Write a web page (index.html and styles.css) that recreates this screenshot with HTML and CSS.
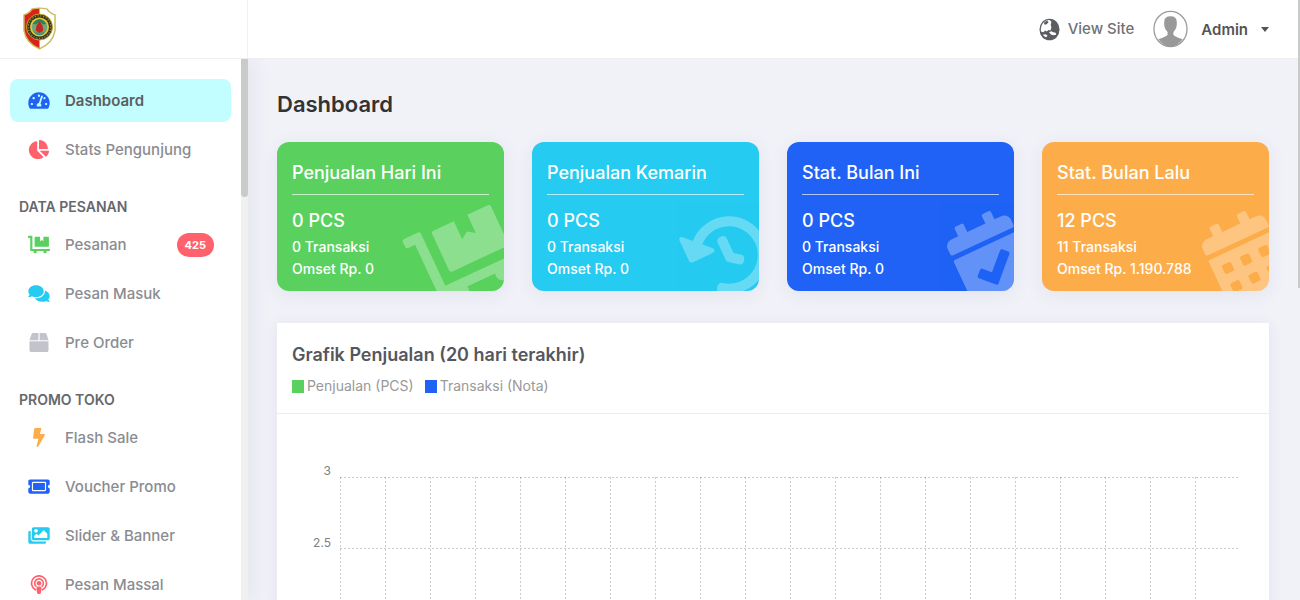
FILE: index.html
```html
<!DOCTYPE html>
<html lang="id">
<head>
<meta charset="utf-8">
<meta name="viewport" content="width=device-width, initial-scale=1">
<title>Dashboard</title>
<link rel="stylesheet" href="styles.css">
</head>
<body>
<div class="app">
  <header class="topbar">
    <a class="brand" href="#" aria-label="Beranda">
      <svg class="logo" viewBox="0 0 34 44">
        <path d="M9 2Q17 0 25 2Q27 6 33 8V24Q31 37 17 43Q3 37 1 24V8Q7 6 9 2Z" fill="#fff"/>
        <path d="M17 1Q12 1 9 2Q7 6 1 8V24Q3 37 17 43Z" fill="#dc211c"/>
        <path d="M9 2Q17 0 25 2Q27 6 33 8V24Q31 37 17 43Q3 37 1 24V8Q7 6 9 2Z" fill="none" stroke="#c9bd5c" stroke-width="1.5"/>
        <circle cx="17" cy="20.5" r="13.4" fill="#39351d" stroke="#c9a925" stroke-width="1"/>
        <circle cx="17" cy="20.5" r="11.6" fill="none" stroke="#9a9155" stroke-width="1.2" stroke-dasharray="1.3 1.6"/>
        <circle cx="17" cy="20.5" r="9.8" fill="#e6c72b"/>
        <circle cx="17" cy="20.5" r="8" fill="#6ea67f"/>
        <path d="M10 17Q17 8 24 17L21 18L17 15L13 18Z" fill="#2f7f5c"/>
        <path d="M17 14L20 19L21 24L17 27L13 24L14 19Z" fill="#c3271f"/>
        <path d="M10 24Q17 29 24 24L21 28Q17 30 13 28Z" fill="#4f9170"/>
      </svg>
    </a>
    <div class="tools">
      <a class="site-link" href="#">
        <svg class="globe" viewBox="0 0 22 24"><ellipse cx="11" cy="12" rx="10.500" ry="11.300" fill="#5b5d60"/><path d="M2 14Q1.500 8 5 4.500Q8 1.800 11.500 2.200L13 4L12.300 7L13 10L12 13L10 12.500L8 14L6.500 13L4.500 15Z" fill="#fff"/><path d="M8.500 2.500L10 4.500L8 6.500L6 7L5 5Z" fill="#5b5d60"/><path d="M10.500 15L13 13.800L15 15L17.500 15.500L18 17.500L15 18L12.500 17.300Z" fill="#fff"/><path d="M4 17.500L7 17L9 18.500L7.500 20Q5 19.500 4 17.500Z" fill="#fff"/></svg>
        <span>View Site</span>
      </a>
      <button class="account" type="button">
        <svg class="avatar" viewBox="0 0 36 38"><ellipse cx="18" cy="19" rx="17" ry="18.200" fill="#fff"/><path d="M11.500 12Q11.500 6 18 6T24.500 12Q25 18 21 22V25Q22 27 30.500 29.500Q25 37 18 37T5.500 29.500Q14 27 15 25V22Q11 18 11.500 12Z" fill="#999"/><ellipse cx="18" cy="19" rx="17" ry="18.200" fill="none" stroke="#999" stroke-width="1.300"/></svg>
        <span>Admin</span>
        <span class="caret"></span>
      </button>
    </div>
  </header>
  <div class="body">
    <aside class="sidebar">
      <nav class="menu">
        <a class="item active" href="#"><svg class="icon blue" viewBox="0 0 576 512"><path d="M288 32C128.940 32 0 160.940 0 320c0 52.800 14.250 102.260 39.060 144.800 5.610 9.620 16.300 15.200 27.440 15.200h443c11.140 0 21.830-5.580 27.440-15.200C561.750 422.260 576 372.800 576 320c0-159.060-128.940-288-288-288zm0 64c14.710 0 26.580 10.130 30.320 23.650-1.110 2.260-2.640 4.230-3.450 6.670l-9.220 27.670c-5.130 3.490-10.970 6.010-17.640 6.010-17.670 0-32-14.330-32-32S270.330 96 288 96zM96 384c-17.670 0-32-14.330-32-32s14.330-32 32-32 32 14.330 32 32-14.330 32-32 32zm48-160c-17.670 0-32-14.330-32-32s14.330-32 32-32 32 14.330 32 32-14.330 32-32 32zm246.770-72.410l-61.330 184C343.130 347.330 352 364.540 352 384c0 11.720-3.380 22.550-8.880 32H232.880c-5.500-9.450-8.880-20.280-8.880-32 0-33.940 26.500-61.430 59.900-63.590l61.340-184.010c4.170-12.560 17.730-19.450 30.360-15.170 12.570 4.190 19.350 17.790 15.170 30.360zm14.660 57.200l15.520-46.550c3.470-1.290 7.130-2.230 11.050-2.230 17.670 0 32 14.330 32 32s-14.330 32-32 32c-11.380-.01-20.890-6.280-26.570-15.220zM480 384c-17.670 0-32-14.330-32-32s14.330-32 32-32 32 14.330 32 32-14.330 32-32 32z"/></svg><span>Dashboard</span></a>
        <a class="item" href="#"><svg class="icon red" viewBox="0 0 544 512"><path d="M527.790 288H290.500l158.030 158.030c6.040 6.040 15.980 6.530 22.190.68 38.700-36.460 65.320-85.610 73.130-140.860 1.340-9.460-6.510-17.850-16.060-17.850zm-15.830-64.800C503.720 103.740 408.260 8.280 288.800.04 279.680-.59 272 7.100 272 16.240V240h223.770c9.140 0 16.820-7.680 16.190-16.800zM224 288V50.710c0-9.550-8.390-17.400-17.840-16.060C86.990 51.490-4.100 155.600.14 280.370 4.500 408.510 114.830 512 243.040 511.980c50.410-.07 96.980-16.250 135.280-43.380 7.900-5.610 8.420-17.140 1.570-24L224 288z"/></svg><span>Stats Pengunjung</span></a>
        <h2 class="group">DATA PESANAN</h2>
        <a class="item" href="#"><svg class="icon green" viewBox="0 0 640 512"><path d="M208 320h384c8.800 0 16-7.200 16-16V48c0-8.800-7.200-16-16-16H448v128l-48-32-48 32V32H208c-8.800 0-16 7.200-16 16v256c0 8.800 7.200 16 16 16zm416 64H128V16c0-8.800-7.200-16-16-16H16C7.200 0 0 7.200 0 16v32c0 8.800 7.200 16 16 16h48v368c0 8.800 7.200 16 16 16h82.900c-1.800 5-2.900 10.400-2.900 16 0 26.500 21.500 48 48 48s48-21.500 48-48c0-5.600-1.200-11-2.900-16H451c-1.800 5-2.900 10.400-2.900 16 0 26.500 21.500 48 48 48s48-21.500 48-48c0-5.600-1.200-11-2.900-16H624c8.800 0 16-7.200 16-16v-32c0-8.800-7.200-16-16-16z"/></svg><span>Pesanan</span><span class="badge">425</span></a>
        <a class="item" href="#"><svg class="icon cyan" viewBox="0 0 576 512"><path d="M416 192c0-88.400-93.100-160-208-160S0 103.600 0 192c0 34.300 14.100 65.900 38 92-13.400 30.200-35.500 54.200-35.800 54.500-2.200 2.300-2.800 5.700-1.500 8.700S4.800 352 8 352c36.600 0 66.900-12.300 88.700-25 32.200 15.700 70.300 25 111.300 25 114.900 0 208-71.600 208-160zm122 220c23.900-26 38-57.700 38-92 0-66.900-53.500-124.200-129.300-148.100.9 6.600 1.300 13.300 1.300 20.100 0 105.900-107.700 192-240 192-10.800 0-21.300-.8-31.700-1.900C207.800 439.600 281.800 480 368 480c41 0 79.100-9.200 111.300-25 21.800 12.700 52.100 25 88.700 25 3.200 0 6.100-1.900 7.300-4.800 1.300-2.900.7-6.300-1.500-8.700-.3-.3-22.400-24.200-35.800-54.500z"/></svg><span>Pesan Masuk</span></a>
        <a class="item" href="#"><svg class="icon gray" viewBox="0 0 512 512"><path d="M509.500 184.600L458.900 32.800C452.400 13.200 434.100 0 413.400 0H272v192h238.700c-.4-2.500-.4-5-1.200-7.400zM240 0H98.600c-20.700 0-39 13.200-45.500 32.800L2.500 184.600c-.8 2.400-.8 4.900-1.200 7.400H240V0zM0 224v240c0 26.500 21.500 48 48 48h416c26.500 0 48-21.500 48-48V224H0z"/></svg><span>Pre Order</span></a>
        <h2 class="group">PROMO TOKO</h2>
        <a class="item" href="#"><svg class="icon orange" viewBox="0 0 320 512"><path d="M296 160H180.600l42.600-129.800C227.200 15 215.700 0 200 0H56C44 0 33.800 8.900 32.200 20.800l-32 240C-1.700 275.200 9.500 288 24 288h118.700L96.600 482.500c-3.600 15.200 8 29.500 23.300 29.500 8.400 0 16.400-4.400 20.800-12l176-304c9.300-15.900-2.200-36-20.700-36z"/></svg><span>Flash Sale</span></a>
        <a class="item" href="#"><svg class="icon blue" viewBox="0 0 576 512"><path d="M128 160h320v192H128V160zm400 96c0 26.510 21.490 48 48 48v96c0 26.510-21.490 48-48 48H48c-26.510 0-48-21.490-48-48v-96c26.510 0 48-21.490 48-48s-21.490-48-48-48v-96c0-26.510 21.490-48 48-48h480c26.510 0 48 21.490 48 48v96c-26.510 0-48 21.490-48 48zm-48-104c0-13.255-10.745-24-24-24H120c-13.255 0-24 10.745-24 24v208c0 13.255 10.745 24 24 24h336c13.255 0 24-10.745 24-24V152z"/></svg><span>Voucher Promo</span></a>
        <a class="item" href="#"><svg class="icon cyan" viewBox="0 0 576 512"><path d="M480 416v16c0 26.510-21.490 48-48 48H48c-26.510 0-48-21.490-48-48V176c0-26.510 21.490-48 48-48h16v208c0 44.112 35.888 80 80 80h336zm96-80V80c0-26.510-21.490-48-48-48H144c-26.510 0-48 21.490-48 48v256c0 26.510 21.490 48 48 48h384c26.510 0 48-21.490 48-48zM256 128c0 26.510-21.490 48-48 48s-48-21.490-48-48 21.490-48 48-48 48 21.490 48 48zm-96 144l55.515-55.515c4.686-4.686 12.284-4.686 16.971 0L272 256l135.515-135.515c4.686-4.686 12.284-4.686 16.971 0L512 208v112H160v-48z"/></svg><span>Slider &amp; Banner</span></a>
        <a class="item" href="#"><svg class="icon red" viewBox="0 0 448 512"><g fill="none" stroke="#ff626d" stroke-width="46" stroke-linecap="round"><path d="M125 398A201 201 0 1 1 323 398"/><path d="M142 303A116 116 0 1 1 306 303"/></g><circle cx="224" cy="222" r="62"/><path d="M224 312c34 0 70 10 70 48 0 30-12 90-20 122-5 22-26 30-50 30s-45-8-50-30c-8-32-20-92-20-122 0-38 36-48 70-48z"/></svg><span>Pesan Massal</span></a>
      </nav>
      <div class="track"><div class="thumb"></div></div>
    </aside>
    <main class="content">
      <h1 class="title">Dashboard</h1>
      <section class="cards">
        <article class="card bg-green">
          <h3 class="card-title">Penjualan Hari Ini</h3>
          <p class="count">0 PCS</p><p class="line">0 Transaksi</p><p class="line">Omset Rp. 0</p>
          <svg class="mark" viewBox="0 0 640 512"><path d="M208 320h384c8.800 0 16-7.200 16-16V48c0-8.800-7.200-16-16-16H448v128l-48-32-48 32V32H208c-8.800 0-16 7.200-16 16v256c0 8.800 7.200 16 16 16zm416 64H128V16c0-8.800-7.200-16-16-16H16C7.200 0 0 7.200 0 16v32c0 8.800 7.200 16 16 16h48v368c0 8.800 7.200 16 16 16h82.900c-1.800 5-2.900 10.400-2.900 16 0 26.500 21.500 48 48 48s48-21.500 48-48c0-5.600-1.200-11-2.900-16H451c-1.800 5-2.900 10.400-2.900 16 0 26.500 21.500 48 48 48s48-21.500 48-48c0-5.600-1.200-11-2.900-16H624c8.800 0 16-7.200 16-16v-32c0-8.800-7.200-16-16-16z"/></svg>
        </article>
        <article class="card bg-cyan">
          <h3 class="card-title">Penjualan Kemarin</h3>
          <p class="count">0 PCS</p><p class="line">0 Transaksi</p><p class="line">Omset Rp. 0</p>
          <svg class="mark" viewBox="0 0 512 512"><path d="M504 255.531c.253 136.640-111.180 248.372-247.820 248.468-59.015.042-113.223-20.530-155.822-54.911-11.077-8.940-11.905-25.541-1.839-35.607l11.267-11.267c8.609-8.609 22.353-9.551 31.891-1.984C173.062 425.135 212.781 440 256 440c101.705 0 184-82.311 184-184 0-101.705-82.311-184-184-184-48.814 0-93.149 18.969-126.068 49.932l50.754 50.754c10.080 10.080 2.941 27.314-11.313 27.314H24c-8.837 0-16-7.163-16-16V38.627c0-14.254 17.234-21.393 27.314-11.314l49.372 49.372C129.209 34.136 189.552 8 256 8c136.810 0 247.747 110.780 248 247.531zm-180.912 78.784l9.823-12.630c8.138-10.463 6.253-25.542-4.210-33.679L288 256.349V152c0-13.255-10.745-24-24-24h-16c-13.255 0-24 10.745-24 24v135.651l65.409 50.874c10.463 8.137 25.541 6.253 33.679-4.210z"/></svg>
        </article>
        <article class="card bg-blue">
          <h3 class="card-title">Stat. Bulan Ini</h3>
          <p class="count">0 PCS</p><p class="line">0 Transaksi</p><p class="line">Omset Rp. 0</p>
          <svg class="mark" viewBox="0 0 448 512"><path d="M436 160H12c-6.627 0-12-5.373-12-12v-36c0-26.510 21.490-48 48-48h48V12c0-6.627 5.373-12 12-12h40c6.627 0 12 5.373 12 12v52h128V12c0-6.627 5.373-12 12-12h40c6.627 0 12 5.373 12 12v52h48c26.510 0 48 21.490 48 48v36c0 6.627-5.373 12-12 12zM12 192h424c6.627 0 12 5.373 12 12v260c0 26.510-21.490 48-48 48H48c-26.510 0-48-21.490-48-48V204c0-6.627 5.373-12 12-12zm333.296 95.947l-28.169-28.398c-4.667-4.705-12.265-4.736-16.970-.068L194.120 364.665l-45.980-46.352c-4.667-4.705-12.266-4.736-16.971-.068l-28.397 28.170c-4.705 4.667-4.736 12.265-.068 16.970l82.601 83.269c4.667 4.705 12.265 4.736 16.970.068l142.953-141.805c4.705-4.667 4.736-12.265.068-16.970z"/></svg>
        </article>
        <article class="card bg-orange">
          <h3 class="card-title">Stat. Bulan Lalu</h3>
          <p class="count">12 PCS</p><p class="line">11 Transaksi</p><p class="line">Omset Rp. 1.190.788</p>
          <svg class="mark" viewBox="0 0 448 512"><path fill-rule="evenodd" d="M436 160H12c-6.627 0-12-5.373-12-12v-36c0-26.510 21.490-48 48-48h48V12c0-6.627 5.373-12 12-12h40c6.627 0 12 5.373 12 12v52h128V12c0-6.627 5.373-12 12-12h40c6.627 0 12 5.373 12 12v52h48c26.510 0 48 21.490 48 48v36c0 6.627-5.373 12-12 12zM0 192h448v272c0 26.500-21.500 48-48 48H48c-26.500 0-48-21.500-48-48zM64 268v40q0 12 12 12h40q12 0 12-12v-40q0-12-12-12H76q-12 0-12 12zM192 268v40q0 12 12 12h40q12 0 12-12v-40q0-12-12-12h-40q-12 0-12 12zM320 268v40q0 12 12 12h40q12 0 12-12v-40q0-12-12-12h-40q-12 0-12 12zM64 396v40q0 12 12 12h40q12 0 12-12v-40q0-12-12-12H76q-12 0-12 12zM192 396v40q0 12 12 12h40q12 0 12-12v-40q0-12-12-12h-40q-12 0-12 12zM320 396v40q0 12 12 12h40q12 0 12-12v-40q0-12-12-12h-40q-12 0-12 12z"/></svg>
        </article>
      </section>
      <section class="panel">
        <div class="panel-head">
          <h3 class="panel-title">Grafik Penjualan (20 hari terakhir)</h3>
          <div class="legend">
            <span class="key"><i class="swatch bg-green"></i>Penjualan (PCS)</span>
            <span class="key"><i class="swatch bg-blue"></i>Transaksi (Nota)</span>
          </div>
        </div>
        <svg class="chart" viewBox="0 0 992 206">
          <defs>
            <pattern id="columns" x="63" y="63" width="45" height="4" patternUnits="userSpaceOnUse"><rect width="1" height="2"/></pattern>
          </defs>
          <rect class="columns" x="63" y="63" width="856" height="143" fill="url(#columns)"/>
          <g class="rows"><path d="M63 63.500H963"/><path d="M63 134.500H963"/></g>
          <g class="ticks"><text x="54" y="61">3</text><text x="54" y="133">2.5</text></g>
        </svg>
      </section>
    </main>
  </div>
  <div class="page-thumb"></div>
</div>
</body>
</html>
```

FILE: styles.css
```css
* { box-sizing: border-box; }
body { margin: 0; font-family: Inter, "Open Sans", sans-serif; color: #555; background: #f1f2f8; }
h1, h2, h3, p { margin: 0; }
a { color: inherit; text-decoration: none; }

.app { position: relative; display: flex; flex-direction: column; height: 100vh; overflow: hidden; }

.topbar { display: flex; flex: none; height: 59px; background: #fff; border-bottom: 1px solid #eeeef0; }
.brand { display: flex; align-items: center; width: 248px; padding: 0 0 2px 23px; border-right: 1px solid #f1f1f3; }
.logo { width: 33px; height: 43px; }
.tools { display: flex; flex: 1; align-items: center; justify-content: flex-end; gap: 19px; padding: 0 31px 0 0; }
.site-link { display: flex; align-items: center; gap: 8px; font-size: 15px; font-weight: 500; line-height: 20px; color: #707276; }
.globe { width: 21px; height: 23px; }
.account { display: flex; align-items: center; gap: 13px; padding: 0; border: 0; background: none; font: 600 15px Inter, sans-serif; color: #555; }
.avatar { width: 35px; height: 38px; }
.caret { border: 4px solid transparent; border-top: 5px solid #555; border-bottom: 0; }

.body { display: flex; flex: 1; min-height: 0; }
.sidebar { display: flex; flex: none; width: 248px; background: #fff; box-shadow: 4px 0 18px rgba(60, 60, 110, .08); clip-path: inset(0 -30px 0 0); }
.menu { flex: 1; min-width: 0; padding: 20px 10px 0; overflow: hidden; }
.item { display: flex; align-items: center; height: 43px; margin-bottom: 6px; padding: 0 17px 0 18px; border-radius: 8px; font-size: 15px; font-weight: 500; color: #8a8c91; }
.item.active { background: #c2fdff; color: #5b5d60; font-weight: 600; }
.icon { width: 22px; height: 19px; margin-right: 15px; fill: currentColor; }
.blue { color: #1f62f5; }
.red { color: #ff626d; }
.green { color: #5ad15e; }
.cyan { color: #25cbf0; }
.gray { color: #c3c4cb; }
.orange { color: #fcad4a; }
.badge { margin-left: auto; padding: 0 8px; border-radius: 12px; background: #ff626d; color: #fff; font-size: 11px; font-weight: 700; line-height: 24px; }
.group { padding: 20px 9px 6px; font-size: 14px; font-weight: 600; line-height: 20px; color: #66686c; }
.track { flex: none; width: 7px; background: #f0f0f0; }
.thumb { height: 138px; border-radius: 0 0 4px 4px; background: #c9cbcb; }
.page-thumb { position: absolute; top: 0; right: 0; width: 2px; height: 288px; background: #c9cbcb; }

.content { flex: 1; min-width: 0; padding: 30px 31px 0 29px; overflow: hidden; }
.title { font-size: 22px; font-weight: 600; line-height: 30px; color: #333; }
.cards { display: grid; grid-template-columns: repeat(4, 1fr); gap: 28px; margin: 23px 0 32px; }
.card { position: relative; padding: 16px 15px 11px; border-radius: 12px; color: #fff; overflow: hidden; box-shadow: 0 4px 18px rgba(60, 60, 110, .08); }
.card-title { padding-bottom: 6px; margin-bottom: 13px; border-bottom: 1px solid rgba(255, 255, 255, .65); font-size: 18px; font-weight: 500; line-height: 30px; }
.count { font-size: 18px; font-weight: 500; line-height: 26px; margin-bottom: 2px; }
.line { font-size: 14px; font-weight: 500; line-height: 22px; }
.mark { position: absolute; right: -10px; bottom: -4px; height: 80px; fill: #fff; opacity: .3; transform: rotate(-25deg); }
.bg-green { background: #5ad15e; }
.bg-cyan { background: #25cbf0; }
.bg-blue { background: #1f62f5; }
.bg-orange { background: #fcad4a; }

.panel { background: #fff; box-shadow: 0 2px 14px rgba(60, 60, 110, .08); }
.panel-head { padding: 17px 15px 16px; border-bottom: 1px solid #ededf0; }
.panel-title { font-size: 18px; font-weight: 600; line-height: 30px; color: #55575c; }
.legend { display: flex; gap: 11px; margin-top: 5px; font-size: 14px; line-height: 22px; color: #999; }
.key { display: flex; align-items: center; gap: 3px; }
.swatch { width: 12px; height: 13px; }
.chart { display: block; width: 100%; }
.columns { opacity: .2; }
.rows { fill: none; stroke: #000; stroke-opacity: .2; stroke-dasharray: 2 2; }
.ticks { font-size: 12px; fill: #808080; text-anchor: end; }
```
